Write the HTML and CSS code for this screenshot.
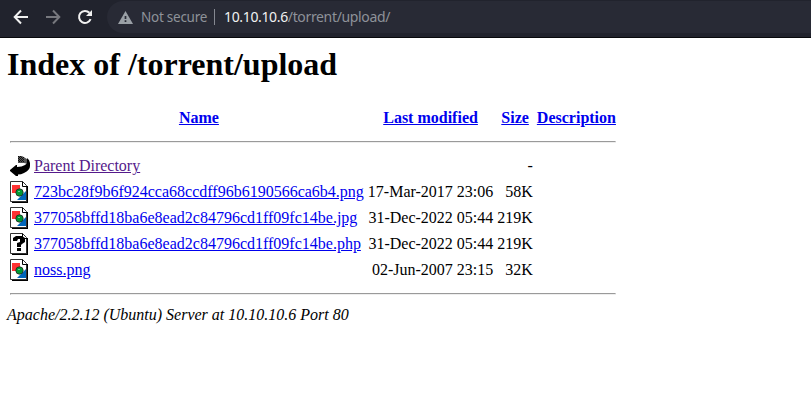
FILE: index.html
```html
<!DOCTYPE html>
<html lang="en">
<head>
<meta charset="utf-8">
<title>Index of /torrent/upload</title>
<link rel="stylesheet" href="styles.css">
</head>
<body>
<svg class="defs" aria-hidden="true">
  <symbol id="image" viewBox="0 0 20 22">
    <path d="M2 20h14V5h2v17H2z" fill="#000"/>
    <path d="M.5.5h12l4 4v16H.5z" fill="#fff" stroke="#333"/>
    <path d="M12.500.5v5h4.500" fill="none" stroke="#000"/>
    <path d="M2 4h8v8H2z" fill="#f33"/>
    <path d="M16 10v9H7z" fill="#06b"/>
    <circle cx="9.500" cy="11.500" r="3.700" fill="#093" stroke="#222" stroke-width=".8"/>
    <path d="M8 10h2v1H8z" fill="#6c9"/>
  </symbol>
  <symbol id="unknown" viewBox="0 0 20 22">
    <path d="M2 20h14V5h2v17H2z" fill="#000"/>
    <path d="M.5.5h12l4 4v16H.5z" fill="#fff" stroke="#333"/>
    <path d="M12.500.5v5h4.500" fill="none" stroke="#000"/>
    <path d="M3 8V5l3-2h6l3 2v4l-3 2-1 1v2H7v-4l3-1V6H8L7 8zM7 15h4v3H7z" fill="#000"/>
  </symbol>
  <symbol id="back" viewBox="0 0 20 22">
    <path d="M8 1h4l5 3 1 5-4-1H8z" fill="#555"/>
    <path d="M8 1h1v1H8zm2 0h1v1h-1zM9 2h1v1H9zm2 0h1v1h-1zm2 0h1v1h-1zM8 3h1v1H8zm2 0h1v1h-1zm2 0h1v1h-1zM9 4h1v1H9zm2 0h1v1h-1zm2 0h1v1h-1zM8 5h1v1H8zm2 0h1v1h-1zm2 0h1v1h-1zM9 6h1v1H9zm2 0h1v1h-1zm2 0h1v1h-1z" fill="#111"/>
    <path d="M17 3q3 2 3 5v3q0 4-6 7-3 1.500-6 1.500V21H6L0 16v-1l6-5h1v2q5 0 8-2 2-1 2-3z" fill="#000"/>
  </symbol>
</svg>
<header class="toolbar">
  <svg class="nav" viewBox="0 0 16 16"><path d="M15 8H2M8 1.500 1.700 8 8 14.500"/></svg>
  <svg class="nav forward" viewBox="0 0 16 16"><path d="M1 8h13M8 1.500 14.300 8 8 14.500"/></svg>
  <svg class="nav reload" viewBox="0 0 16 16"><path d="M13.600 10.200A6 6 0 1 1 12.400 3.800"/><path class="tip" d="M15 1v6H9z"/></svg>
  <div class="address-bar">
    <svg class="warning" viewBox="0 0 14 12"><path d="M7 0l7 12H0z" fill="#9aa0a6"/><path d="M6.200 4.500h1.600v3H6.200zm0 4h1.600v1.700H6.200z" fill="#282a35"/></svg>
    <span class="security">Not secure</span>
    <span class="separator"></span>
    <span class="url"><span class="host">10.10.10.6</span>/torrent/upload/</span>
  </div>
</header>
<main>
  <h1>Index of /torrent/upload</h1>
  <table>
    <tr><th class="icon-cell"></th><th><a href="#">Name</a></th><th><a href="#">Last modified</a></th><th><a href="#">Size</a></th><th><a href="#">Description</a></th></tr>
    <tr><th colspan="5"><hr></th></tr>
    <tr><td class="icon-cell"><svg class="icon"><use href="#back"/></svg></td><td><a class="visited" href="#">Parent Directory</a></td><td></td><td class="right">-</td><td></td></tr>
    <tr><td class="icon-cell"><svg class="icon"><use href="#image"/></svg></td><td><a href="#">723bc28f9b6f924cca68ccdff96b6190566ca6b4.png</a></td><td class="right">17-Mar-2017 23:06</td><td class="right">58K</td><td></td></tr>
    <tr><td class="icon-cell"><svg class="icon"><use href="#image"/></svg></td><td><a href="#">377058bffd18ba6e8ead2c84796cd1ff09fc14be.jpg</a></td><td class="right">31-Dec-2022 05:44</td><td class="right">219K</td><td></td></tr>
    <tr><td class="icon-cell"><svg class="icon"><use href="#unknown"/></svg></td><td><a href="#">377058bffd18ba6e8ead2c84796cd1ff09fc14be.php</a></td><td class="right">31-Dec-2022 05:44</td><td class="right">219K</td><td></td></tr>
    <tr><td class="icon-cell"><svg class="icon"><use href="#image"/></svg></td><td><a href="#">noss.png</a></td><td class="right">02-Jun-2007 23:15</td><td class="right">32K</td><td></td></tr>
    <tr><th colspan="5"><hr></th></tr>
  </table>
  <address>Apache/2.2.12 (Ubuntu) Server at 10.10.10.6 Port 80</address>
</main>
</body>
</html>
```
FILE: styles.css
```css
body {
  margin: 0;
  background: #fff;
  color: #000;
  font: 16px "Liberation Serif", serif;
  overflow: hidden;
}
.defs { position: absolute; width: 0; height: 0; }
.toolbar {
  box-sizing: border-box;
  display: flex;
  height: 38px;
  padding: 1px 0 4px 13px;
  align-items: center;
  background: #21232d;
  border-bottom: 1px solid #08090c;
}
.nav {
  width: 16px;
  height: 16px;
  margin-right: 16px;
  flex: none;
  fill: none;
  stroke: #f1f1f1;
  stroke-width: 2;
}
.forward { stroke: #77787e; }
.reload { margin-right: 14px; }
.reload .tip { fill: #f1f1f1; stroke: none; }
.address-bar {
  display: flex;
  flex: 1;
  height: 32px;
  align-items: center;
  padding-left: 11px;
  border-radius: 16px 0 0 16px;
  background: #282a35;
  color: #8e9299;
  font: 14px/18px "Noto Sans", sans-serif;
  white-space: nowrap;
}
.warning { width: 15px; height: 13px; margin-right: 8px; }
.security { width: 66px; font-size: 13.5px; letter-spacing: -0.25px; }
.url { letter-spacing: -0.35px; }
.separator { width: 1px; height: 16px; margin: 0 9px 0 7px; background: #858891; }
.host { color: #f1f1f1; }
main { padding: 8px 7px 0; }
h1 { margin: 0 0 21.4px; font-size: 32px; line-height: 37px; }
table { border-spacing: 2px; }
th, td { padding: 1px; white-space: nowrap; line-height: 18px; }
.icon-cell { height: 22px; width: 20px; }
.icon { display: block; width: 20px; height: 22px; }
.right { text-align: right; }
hr { margin: 8px 0; }
a { color: #00e; }
.visited { color: #551a8b; }
address { line-height: 18px; }
```
